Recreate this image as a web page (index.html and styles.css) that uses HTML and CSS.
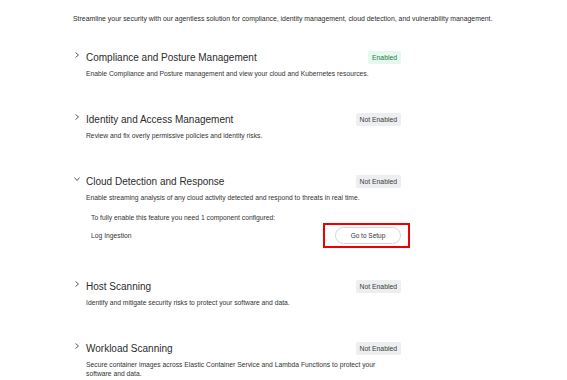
FILE: index.html
```html
<!DOCTYPE html>
<html>
<head>
    <title>Security Features</title>
    <link rel="stylesheet" href="styles.css">
</head>
<body>
    <div class="page">
        <p class="intro">Streamline your security with our agentless solution for compliance, identity management, cloud detection, and vulnerability management.</p>

        <div class="feature">
            <div class="feature-head">
                <svg class="chevron" viewBox="0 0 8 8"><path d="M2.5 1.5 L5.5 4 L2.5 6.5" /></svg>
                <h2>Compliance and Posture Management</h2>
                <span class="badge badge-on">Enabled</span>
            </div>
            <p class="desc">Enable Compliance and Posture management and view your cloud and Kubernetes resources.</p>
        </div>

        <div class="feature">
            <div class="feature-head">
                <svg class="chevron" viewBox="0 0 8 8"><path d="M2.5 1.5 L5.5 4 L2.5 6.5" /></svg>
                <h2>Identity and Access Management</h2>
                <span class="badge">Not Enabled</span>
            </div>
            <p class="desc">Review and fix overly permissive policies and identity risks.</p>
        </div>

        <div class="feature open">
            <div class="feature-head">
                <svg class="chevron" viewBox="0 0 8 8"><path d="M1.5 2.5 L4 5.5 L6.5 2.5" /></svg>
                <h2>Cloud Detection and Response</h2>
                <span class="badge">Not Enabled</span>
            </div>
            <p class="desc">Enable streaming analysis of any cloud activity detected and respond to threats in real time.</p>
            <div class="setup">
                <p class="setup-note">To fully enable this feature you need 1 component configured:</p>
                <div class="setup-row">
                    <span>Log Ingestion</span>
                    <div class="highlight">
                        <button class="setup-btn">Go to Setup</button>
                    </div>
                </div>
            </div>
        </div>

        <div class="feature">
            <div class="feature-head">
                <svg class="chevron" viewBox="0 0 8 8"><path d="M2.5 1.5 L5.5 4 L2.5 6.5" /></svg>
                <h2>Host Scanning</h2>
                <span class="badge">Not Enabled</span>
            </div>
            <p class="desc">Identify and mitigate security risks to protect your software and data.</p>
        </div>

        <div class="feature">
            <div class="feature-head">
                <svg class="chevron" viewBox="0 0 8 8"><path d="M2.5 1.5 L5.5 4 L2.5 6.5" /></svg>
                <h2>Workload Scanning</h2>
                <span class="badge">Not Enabled</span>
            </div>
            <p class="desc">Secure container images across Elastic Container Service and Lambda Functions to protect your software and data.</p>
        </div>
    </div>
</body>
</html>
```

FILE: styles.css
```css
body {
    margin: 0;
    background-color: #fff;
    color: #2b2b2b;
    font-family: "Liberation Sans", Arial, sans-serif;
    overflow: hidden;
}
.page {
    padding: 14px 0 0 73px;
    width: 440px;
}
.intro {
    margin: 0 0 26px 0;
    font-size: 6.9px;
    line-height: 10px;
    white-space: nowrap;
}
.feature {
    width: 328px;
    height: 62px;
}
.feature:last-child {
    height: auto;
}
.feature.open {
    height: 105px;
}
.feature-head {
    display: flex;
    align-items: center;
    height: 14px;
}
.chevron {
    width: 8px;
    height: 8px;
    margin: 0 5px 4px 0;
    fill: none;
    stroke: #333;
    stroke-width: 0.8;
}
h2 {
    flex: 1;
    margin: 0;
    font-size: 10px;
    font-weight: 400;
    color: #2b2b2b;
}
.badge {
    background-color: #eceef0;
    color: #3a3a3a;
    font-size: 6.8px;
    padding: 3px 4px;
    border-radius: 2px;
}
.badge-on {
    background-color: #e4f8ee;
    color: #1f7a52;
}
.desc {
    margin: 5px 0 0 13px;
    font-size: 6.75px;
    line-height: 9px;
    color: #333;
    width: 300px;
}
.setup {
    margin: 12px 0 0 18px;
    font-size: 6.75px;
    color: #333;
}
.setup-note {
    margin: 0 0 10px 0;
}
.setup-row {
    display: flex;
    justify-content: space-between;
    align-items: center;
    height: 9px;
}
.highlight {
    border: 2px solid #ee0000;
    padding: 2px 7px 2px 10px;
    margin-right: -9px;
}
.setup-btn {
    display: block;
    font-family: inherit;
    font-size: 6.5px;
    color: #333;
    background-color: #fff;
    border: 1px solid #d4d6da;
    border-radius: 9px;
    width: 66px;
    height: 17px;
    padding: 0;
}
```
